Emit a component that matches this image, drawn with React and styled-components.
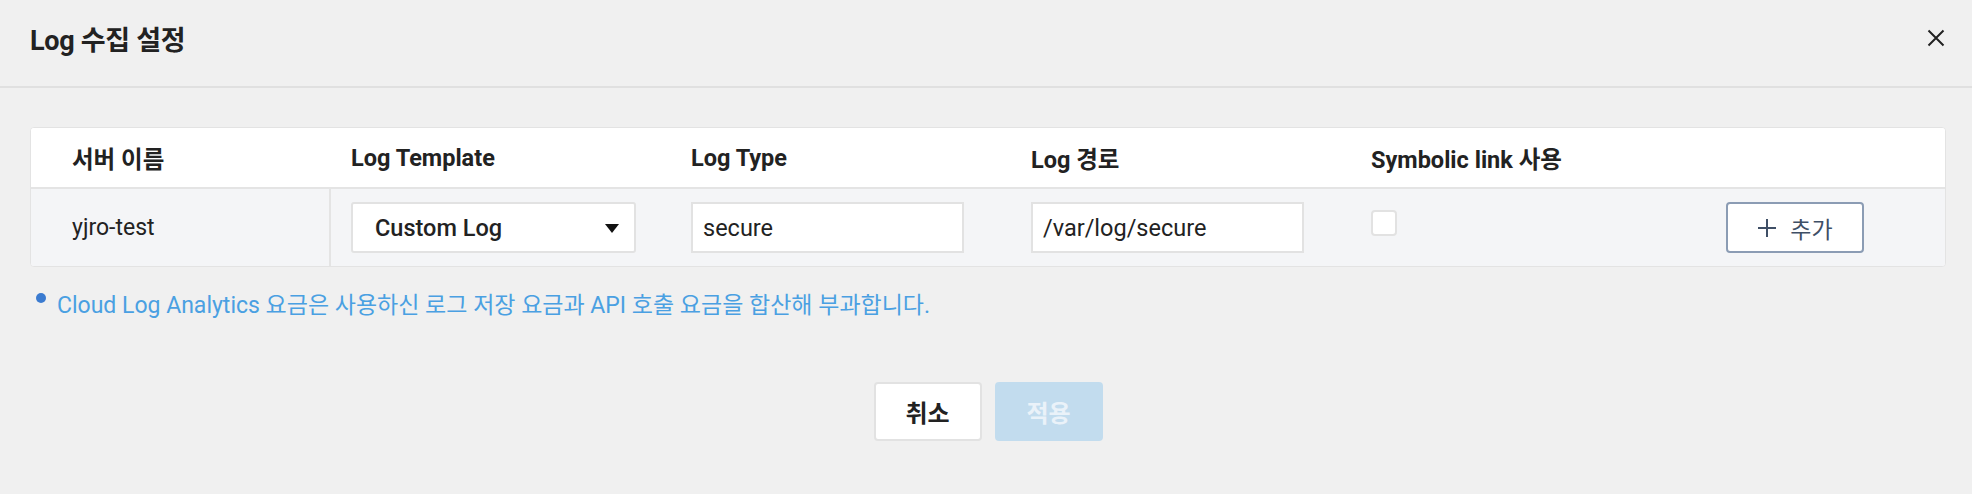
import React from "react";
import styled, { createGlobalStyle } from "styled-components";

const Global = createGlobalStyle`
  html, body { margin: 0; padding: 0; background: #f0f0f0; }
  body { font-family: Roboto, "Noto Sans CJK KR", sans-serif; color: #222; }
  * { box-sizing: border-box; }
`;

const Page = styled.div`
  width: 1972px;
  height: 494px;
  background: #f0f0f0;
  display: flex;
  flex-direction: column;
`;

const Header = styled.header`
  height: 88px;
  padding: 0 26px 10px 30px;
  border-bottom: 2px solid #e0e0e0;
  display: flex;
  align-items: center;
  justify-content: space-between;
`;

const Title = styled.h1`
  margin: 0;
  font-size: 27px;
  font-weight: 700;
  color: #222;
  letter-spacing: -0.3px;
`;

const CloseBtn = styled.button`
  border: 0;
  background: transparent;
  padding: 0;
  width: 20px;
  height: 20px;
  display: flex;
  align-items: center;
  justify-content: center;
  cursor: pointer;
`;

const Body = styled.main`
  padding: 39px 26px 0 30px;
  display: flex;
  flex-direction: column;
`;

const Card = styled.div`
  border: 1px solid #e3e3e3;
  border-radius: 4px;
  background: #fff;
  overflow: hidden;
`;

const Row = styled.div`
  display: grid;
  grid-template-columns: 300px 340px 340px 340px 1fr;
  height: ${(p) => (p.$head ? "61px" : "77px")};
  background: ${(p) => (p.$head ? "#fff" : "#f4f5f7")};
  border-bottom: ${(p) => (p.$head ? "2px solid #e4e4e4" : "0")};
`;

const Cell = styled.div`
  display: flex;
  align-items: center;
  padding-left: ${(p) => (p.$first ? "41px" : "20px")};
  padding-right: ${(p) => (p.$end ? "81px" : "0")};
  justify-content: ${(p) => (p.$end ? "space-between" : "flex-start")};
  border-right: ${(p) => (p.$divider ? "2px solid #e4e4e4" : "0")};
  font-size: 23px;
  color: #222;
`;

const HeadText = styled.span`
  font-weight: 700;
  font-size: 23.5px;
  color: #222;
`;

const SelectBox = styled.div`
  position: relative;
  width: 285px;
  height: 51px;
  background: #fff;
  border: 2px solid #e2e2e2;
  border-radius: 3px;
  display: flex;
  align-items: center;
  padding-left: 22px;
  font-size: 23.5px;
  font-weight: 500;
  color: #222;
`;

const Arrow = styled.span`
  position: absolute;
  right: 15px;
  top: 50%;
  margin-top: -4px;
  width: 0;
  height: 0;
  border-left: 7px solid transparent;
  border-right: 7px solid transparent;
  border-top: 9px solid #111;
`;

const TextInput = styled.input`
  width: 273px;
  height: 51px;
  background: #fff;
  border: 2px solid #e2e2e2;
  border-radius: 0;
  padding: 0 10px;
  font-family: Roboto, "Noto Sans CJK KR", sans-serif;
  font-size: 23.5px;
  color: #222;
  outline: none;
`;

const CheckBox = styled.span`
  width: 26px;
  height: 26px;
  background: #fff;
  border: 2px solid #e2e2e2;
  border-radius: 4px;
  margin-top: -10px;
`;

const AddBtn = styled.button`
  width: 138px;
  height: 51px;
  background: #fff;
  border: 2px solid #8b9cb4;
  border-radius: 4px;
  display: flex;
  align-items: center;
  justify-content: center;
  gap: 13px;
  font-family: Roboto, "Noto Sans CJK KR", sans-serif;
  font-size: 23px;
  color: #3f4f66;
  cursor: pointer;
`;

const Note = styled.p`
  margin: 25px 0 0 0;
  padding-left: 27px;
  position: relative;
  font-size: 23px;
  line-height: 28px;
  color: #4aa0e2;
`;

const Dot = styled.span`
  position: absolute;
  left: 6px;
  top: 1px;
  width: 10px;
  height: 10px;
  border-radius: 50%;
  background: #3b7bd0;
`;

const Footer = styled.div`
  display: flex;
  justify-content: center;
  gap: 13px;
  margin-top: 62px;
`;

const FootBtn = styled.button`
  width: 108px;
  height: 59px;
  border-radius: 4px;
  font-family: Roboto, "Noto Sans CJK KR", sans-serif;
  font-size: 24px;
  font-weight: 700;
  cursor: pointer;
  background: ${(p) => (p.$primary ? "#c2dcee" : "#fff")};
  color: ${(p) => (p.$primary ? "#eaf2f9" : "#222")};
  border: 2px solid ${(p) => (p.$primary ? "#c2dcee" : "#e2e2e2")};
`;

export default function App() {
  return (
    <>
      <Global />
      <Page>
        <Header>
          <Title>Log 수집 설정</Title>
          <CloseBtn aria-label="close">
            <svg width="18" height="18" viewBox="0 0 18 18">
              <path d="M1.5 1.5 L16.5 16.5 M16.5 1.5 L1.5 16.5" stroke="#222" strokeWidth="2" fill="none" />
            </svg>
          </CloseBtn>
        </Header>
        <Body>
          <Card>
            <Row $head>
              <Cell $first><HeadText>서버 이름</HeadText></Cell>
              <Cell><HeadText>Log Template</HeadText></Cell>
              <Cell><HeadText>Log Type</HeadText></Cell>
              <Cell><HeadText>Log 경로</HeadText></Cell>
              <Cell><HeadText>Symbolic link 사용</HeadText></Cell>
            </Row>
            <Row>
              <Cell $first $divider>yjro-test</Cell>
              <Cell>
                <SelectBox>
                  Custom Log
                  <Arrow />
                </SelectBox>
              </Cell>
              <Cell>
                <TextInput defaultValue="secure" />
              </Cell>
              <Cell>
                <TextInput defaultValue="/var/log/secure" />
              </Cell>
              <Cell $end>
                <CheckBox />
                <AddBtn>
                  <svg width="20" height="20" viewBox="0 0 20 20">
                    <path d="M10 1 V19 M1 10 H19" stroke="#3f4f66" strokeWidth="2" fill="none" />
                  </svg>
                  추가
                </AddBtn>
              </Cell>
            </Row>
          </Card>
          <Note>
            <Dot />
            Cloud Log Analytics 요금은 사용하신 로그 저장 요금과 API 호출 요금을 합산해 부과합니다.
          </Note>
          <Footer>
            <FootBtn>취소</FootBtn>
            <FootBtn $primary>적용</FootBtn>
          </Footer>
        </Body>
      </Page>
    </>
  );
}
